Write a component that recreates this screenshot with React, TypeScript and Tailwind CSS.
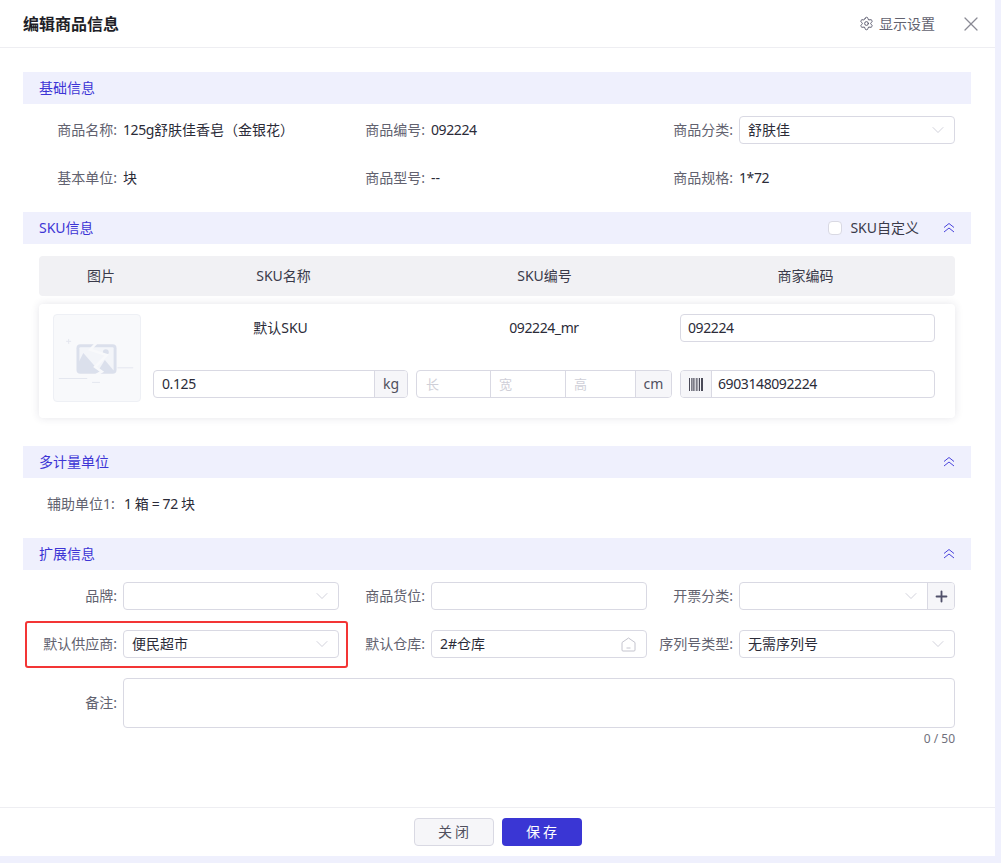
import { ChevronDown, Plus, Settings, X } from "lucide-react";
import type { ReactNode } from "react";

const borderClass = "border border-[#d9d9e3] rounded";
const latinClass = "tracking-[-0.4px]";

const Band = ({ title, children }: { title: ReactNode; children?: ReactNode }) => (
  <div className="h-8 bg-[#eff0fd] flex items-center pl-4 pr-4 text-[#3d35d5]">
    <span className="flex-1">{title}</span>
    {children}
  </div>
);

const Collapse = () => (
  <svg width="12" height="12" viewBox="0 0 12 12" fill="none" stroke="#4a44dc" strokeWidth="1">
    <path d="M1 5.500L6 1.500l5 4M1 10L6 6l5 4" />
  </svg>
);

// label text + ascii colon, right aligned against the control
const Label = ({ text }: { text: string }) => (
  <div className="w-[92px] pr-[6px] text-right text-[#62626f] whitespace-nowrap">{text}:</div>
);

const Field = ({ label, children }: { label: string; children: ReactNode }) => (
  <div className="flex items-center">
    <Label text={label} />
    <div className="w-[216px]">{children}</div>
  </div>
);

const Select = ({ value, addon }: { value?: string; addon?: boolean }) => (
  <div className={`h-7 flex ${borderClass} overflow-hidden`}>
    <div className="flex-1 flex items-center pl-[8px] pr-[6px] text-[#2b2b38]">
      <span className="flex-1">{value}</span>
      <ChevronDown className="w-[20px] h-[20px] text-[#c9c9d4]" strokeWidth={1} />
    </div>
    {addon && (
      <div className="w-[27px] bg-[#f6f6f9] border-l border-[#d9d9e3] flex items-center justify-center text-[#50506a]">
        <Plus className="w-[17px] h-[17px]" strokeWidth={2.6} />
      </div>
    )}
  </div>
);

const Info = ({ label, children }: { label: string; children: ReactNode }) => (
  <div className="h-7 flex items-center">
    <Label text={label} />
    <div className="text-[#2b2b38] whitespace-nowrap">{children}</div>
  </div>
);

const BrokenImage = () => (
  <svg className="w-full h-full" viewBox="0 0 88 88" fill="none">
    <path d="M15 24.500v5M12.500 27h5" stroke="#e3e6ef" strokeWidth="1" />
    <rect x="23" y="30" width="41" height="30" rx="4" fill="#dbe0ec" />
    <rect x="26" y="33" width="35" height="24" rx="1" fill="#f3f5f9" />
    <path d="M24 51l6-12 15 17v2H26z" fill="#dbe0ec" />
    <path d="M44 59l8-13 11 13z" fill="#dbe0ec" />
    <circle cx="53" cy="38" r="3" fill="#dbe0ec" />
    <path d="M45 27l-8 8.500 17 5.500-12 12 7 5-7 4" stroke="#f8f9fb" strokeWidth="2.500" />
    <path d="M65 54h16M5 65h29M39 69h8" stroke="#e3e6ef" strokeWidth="1" />
  </svg>
);

const Barcode = () => (
  <svg width="14" height="13" viewBox="0 0 14 13">
    <path
      d="M0 0h1v13H0zM2 0h.7v13H2zM3.500 0h1.200v13H3.500zM5.500 0h.7v13h-.7zM7 0h.7v13H7zM8.500 0h.7v13h-.7zM10 0h1v13h-1zM12 0h2v13h-2z"
      fill="#4a4a58"
    />
  </svg>
);

const WarehouseIcon = () => (
  <svg width="15" height="15" viewBox="0 0 15 15" fill="none" stroke="#c4c4ce" strokeWidth="1">
    <path d="M1 5.500L7.500 1 14 5.500V13a1 1 0 0 1-1 1H2a1 1 0 0 1-1-1z" />
    <path d="M5.500 11h4" />
  </svg>
);

export default function App() {
  return (
    <div className="w-[1001px] h-[863px] bg-[#eff0fd] text-sm font-['Noto_Sans','Noto_Sans_CJK_SC',sans-serif] overflow-hidden">
      <div className="w-[995px] h-[856px] bg-white flex flex-col">
        {/* Header */}
        <div className="h-[48px] shrink-0 border-b border-[#eeeef2] flex items-center pl-[23px] pr-3">
          <div className="flex-1 text-base font-bold text-[#1f1f28]">编辑商品信息</div>
          <div className="flex items-center text-[#62626f] mr-6">
            <Settings className="w-[15px] h-[15px] text-[#55556a] mr-[5px]" strokeWidth={1.5} />
            显示设置
          </div>
          <X className="w-6 h-6 text-[#8a8a94]" strokeWidth={1.25} />
        </div>

        {/* Body */}
        <div className="flex-1 pt-6 pl-[23px] pr-6 relative">
          <Band title="基础信息" />
          <div className="ml-2 mt-3 grid grid-cols-[repeat(3,308px)] gap-y-5">
            <Info label="商品名称">
              <span className={latinClass}>125g</span>舒肤佳香皂（金银花）
            </Info>
            <Info label="商品编号">
              <span className={latinClass}>092224</span>
            </Info>
            <Field label="商品分类">
              <Select value="舒肤佳" />
            </Field>
            <Info label="基本单位">块</Info>
            <Info label="商品型号">--</Info>
            <Info label="商品规格">
              <span className={latinClass}>1*72</span>
            </Info>
          </div>

          <div className="mt-5">
            <Band title="SKU信息">
              <div className="w-[14px] h-[14px] bg-white border border-[#d9d9e3] rounded-sm mr-2" />
              <span className="text-[#3a3a4a] mr-6">SKU自定义</span>
              <Collapse />
            </Band>
          </div>

          <div className="ml-4 w-[916px] mt-3 h-10 bg-[#f1f1f4] rounded flex items-center text-center text-[#3a3a4a]">
            <div className="w-[124px]">图片</div>
            <div className="w-[241px]">SKU名称</div>
            <div className="w-[281px]">SKU编号</div>
            <div className="w-[241px]">商家编码</div>
          </div>

          <div className="ml-4 w-[916px] mt-2 h-[114px] bg-white rounded shadow-[0_0_8px_rgba(40,40,80,0.12)] flex pl-[14px] pt-[10px]">
            <div className="w-[88px] h-[88px] shrink-0 bg-[#f8f9fb] border border-[#eef0f5] rounded">
              <BrokenImage />
            </div>
            <div className="ml-3 grid grid-cols-[255px_256px_255px] gap-x-2 gap-y-7 auto-rows-[28px] items-center text-[#2b2b38]">
              <div className="text-center">默认SKU</div>
              <div className={`text-center ${latinClass}`}>092224_mr</div>
              <div className={`h-7 flex items-center pl-[7px] ${latinClass} ${borderClass}`}>092224</div>

              <div className={`h-7 flex overflow-hidden ${borderClass}`}>
                <div className={`flex-1 flex items-center pl-2 ${latinClass}`}>0.125</div>
                <div className="w-[33px] bg-[#f6f6f9] border-l border-[#d9d9e3] flex items-center justify-center text-[#50505e]">kg</div>
              </div>
              <div className={`h-7 flex overflow-hidden text-[13px] text-[#cfcfd8] ${borderClass}`}>
                <div className="w-[74px] flex items-center pl-[9px] border-r border-[#d9d9e3]">长</div>
                <div className="w-[75px] flex items-center pl-[8px] border-r border-[#d9d9e3]">宽</div>
                <div className="w-[69px] flex items-center pl-[8px]">高</div>
                <div className="flex-1 bg-[#f6f6f9] border-l border-[#d9d9e3] flex items-center justify-center text-sm text-[#50505e]">cm</div>
              </div>
              <div className={`h-7 flex overflow-hidden ${borderClass}`}>
                <div className="w-[31px] bg-[#f6f6f9] border-r border-[#d9d9e3] flex items-center justify-center">
                  <Barcode />
                </div>
                <div className={`flex-1 flex items-center pl-[6px] ${latinClass}`}>6903148092224</div>
              </div>
            </div>
          </div>

          <div className="mt-7">
            <Band title="多计量单位">
              <Collapse />
            </Band>
          </div>
          <div className="mt-3 h-7 flex items-center pl-6 text-[#2b2b38]">
            <span className="w-[77px] text-[#62626f] whitespace-nowrap">辅助单位1:</span>
            <span className={latinClass}>1 箱 = 72 块</span>
          </div>

          <div className="mt-5">
            <Band title="扩展信息">
              <Collapse />
            </Band>
          </div>
          <div className="ml-2 mt-3 relative">
            <div className="grid grid-cols-[repeat(3,308px)] gap-y-5">
              <Field label="品牌">
                <Select />
              </Field>
              <Field label="商品货位">
                <div className={`h-7 ${borderClass}`} />
              </Field>
              <Field label="开票分类">
                <Select addon />
              </Field>
              <Field label="默认供应商">
                <Select value="便民超市" />
              </Field>
              <Field label="默认仓库">
                <div className={`h-7 flex items-center pl-2 pr-[10px] text-[#2b2b38] ${borderClass}`}>
                  <span className="flex-1">2#仓库</span>
                  <WarehouseIcon />
                </div>
              </Field>
              <Field label="序列号类型">
                <Select value="无需序列号" />
              </Field>
            </div>
            <div className="mt-5 flex items-center">
              <Label text="备注" />
              <div className={`w-[832px] h-[50px] ${borderClass}`} />
            </div>
            <div className="text-right text-xs text-[#70707c] w-[924px] mt-[3px]">0 / 50</div>
            {/* Red highlight over the supplier field */}
            <div className="absolute left-[-6px] top-[39px] w-[323px] h-[47px] border-2 border-[#f33535] rounded-[3px]" />
          </div>
        </div>

        {/* Footer */}
        <div className="h-[49px] shrink-0 border-t border-[#eeeef2] flex items-center justify-center gap-2 pb-[1px]">
          <div className="w-[80px] h-7 flex items-center justify-center pl-[3px] bg-[#f6f6f9] border border-[#d9d9e3] rounded text-[#50505e] tracking-[3px]">关闭</div>
          <div className="w-[80px] h-7 flex items-center justify-center pl-[3px] bg-[#3a36d4] rounded text-white tracking-[3px]">保存</div>
        </div>
      </div>
    </div>
  );
}
